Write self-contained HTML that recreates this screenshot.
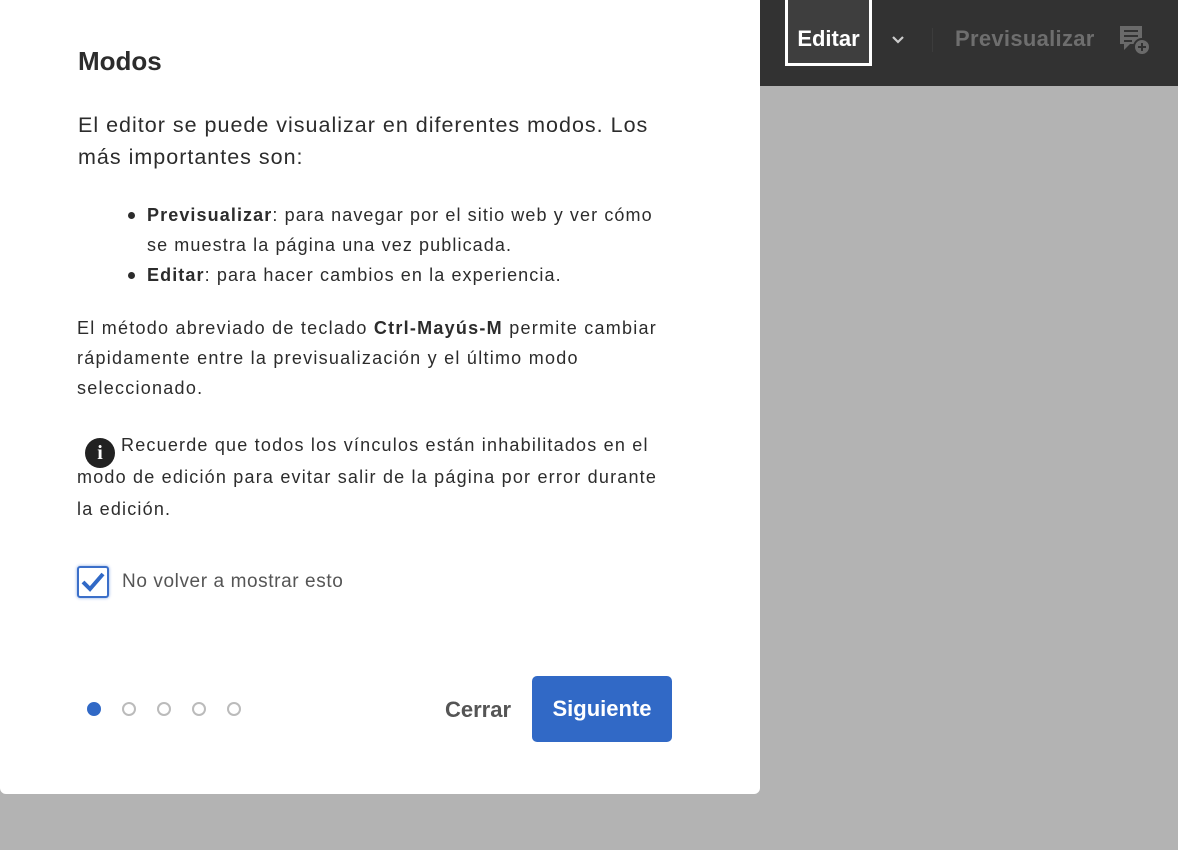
<!DOCTYPE html>
<html><head><meta charset="utf-8"><style>
*{margin:0;padding:0;box-sizing:border-box}
body{width:1178px;height:850px;background:#b3b3b3;font-family:"Liberation Sans",sans-serif;position:relative;overflow:hidden;color:#2c2c2c}
.bar{position:absolute;left:760px;top:0;width:418px;height:86px;background:#323232}
.edit{position:absolute;left:785px;top:0;width:87px;height:66px;border:3px solid #fff;border-top:none;background:#3e3e3e;color:#fff;font-weight:bold;font-size:22px;text-align:center;line-height:78px}
.chev{position:absolute;left:890px;top:32px}
.sep{position:absolute;left:932px;top:28px;width:1px;height:24px;background:#3c3c3c}
.prev{position:absolute;left:955px;top:26px;color:#6e6e6e;font-weight:bold;font-size:22px;letter-spacing:0.3px}
.dlg{position:absolute;left:0;top:0;width:760px;height:794px;background:#fff;border-radius:0 0 6px 6px}
h1{position:absolute;left:78px;top:46px;font-size:26px;font-weight:bold;color:#2c2c2c}
.p1{position:absolute;left:78px;top:109px;white-space:nowrap;font-size:21.5px;line-height:32px;letter-spacing:1px}
ul{position:absolute;left:147px;top:200px;white-space:nowrap;font-size:18px;line-height:30px;list-style:none;letter-spacing:1.1px}
ul li{position:relative}
ul li:before{content:"";position:absolute;left:-19px;top:12px;width:7px;height:7px;border-radius:50%;background:#2c2c2c}
.p2{position:absolute;left:77px;top:313px;white-space:nowrap;font-size:18px;line-height:30px;letter-spacing:1.25px}
.p3{position:absolute;left:77px;top:429px;white-space:nowrap;font-size:18px;line-height:32px;letter-spacing:1.2px}
.info{display:inline-block;width:30px;height:30px;border-radius:50%;background:#222;color:#fff;font-weight:bold;text-align:center;line-height:30px;font-size:20px;vertical-align:-8px;margin:-8px 6px -8px 8px;font-family:"Liberation Serif",serif;letter-spacing:0}
.cb{position:absolute;left:77px;top:566px;width:32px;height:32px;border:2px solid #3b6fc9;border-radius:3px;box-shadow:0 0 3px #8aa8e0}
.cbl{position:absolute;left:122px;top:571px;font-size:19px;color:#555;letter-spacing:0.6px}
.dot{position:absolute;top:702px;width:14px;height:14px;border-radius:50%;border:2px solid #bbb}
.cerrar{position:absolute;left:445px;top:697px;font-size:22px;font-weight:bold;color:#555}
.sig{position:absolute;left:532px;top:676px;width:140px;height:66px;background:#3169c6;border-radius:5px;color:#fff;font-weight:bold;font-size:22px;text-align:center;line-height:66px}
</style></head><body>
<div class="bar"></div>
<div class="edit">Editar</div>
<svg class="chev" width="16" height="16" viewBox="0 0 16 16"><path d="M3 5l5 5 5-5" stroke="#ccc" stroke-width="2.2" fill="none"/></svg>
<div class="sep"></div>
<div class="prev">Previsualizar</div>
<svg style="position:absolute;left:1118px;top:24px" width="36" height="32" viewBox="0 0 36 32"><path d="M2 2h22v18h-12l-6 6v-6h-4z" fill="#6a6a6a"/><path d="M6 7h14M6 12h14M6 17h8" stroke="#323232" stroke-width="2"/><circle cx="24" cy="23" r="8" fill="#6a6a6a" stroke="#323232" stroke-width="2"/><path d="M24 19v8M20 23h8" stroke="#323232" stroke-width="2"/></svg>
<div class="dlg">
<h1>Modos</h1>
<div class="p1">El editor se puede visualizar en diferentes modos. Los<br>más importantes son:</div>
<ul><li><b>Previsualizar</b>: para navegar por el sitio web y ver cómo<br>se muestra la página una vez publicada.</li><li><b>Editar</b>: para hacer cambios en la experiencia.</li></ul>
<div class="p2">El método abreviado de teclado <b>Ctrl-Mayús-M</b> permite cambiar<br>rápidamente entre la previsualización y el último modo<br>seleccionado.</div>
<div class="p3"><span class="info">i</span>Recuerde que todos los vínculos están inhabilitados en el<br>modo de edición para evitar salir de la página por error durante<br>la edición.</div>
<div class="cb"><svg width="28" height="28" viewBox="0 0 28 28"><path d="M4 14l7 7L24 6" stroke="#3169c6" stroke-width="4" fill="none"/></svg></div>
<div class="cbl">No volver a mostrar esto</div>
<div class="dot" style="left:87px;background:#3169c6;border-color:#3169c6"></div>
<div class="dot" style="left:122px"></div>
<div class="dot" style="left:157px"></div>
<div class="dot" style="left:192px"></div>
<div class="dot" style="left:227px"></div>
<div class="cerrar">Cerrar</div>
<div class="sig">Siguiente</div>
</div>
</body></html>
